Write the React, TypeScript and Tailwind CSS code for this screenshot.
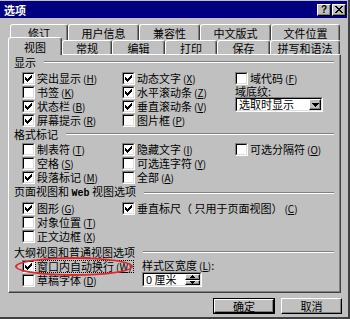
import React from "react";

const FONT = "font-['Noto_Sans_CJK_SC','Noto_Sans',sans-serif]";

function Check() {
  const px: [number, number][] = [
    [6, 0],
    [5, 1], [6, 1],
    [0, 2], [4, 2], [5, 2], [6, 2],
    [0, 3], [1, 3], [3, 3], [4, 3], [5, 3],
    [0, 4], [1, 4], [2, 4], [3, 4], [4, 4],
    [1, 5], [2, 5], [3, 5],
    [2, 6],
  ];
  return (
    <svg width="7" height="7" viewBox="0 0 7 7" shapeRendering="crispEdges">
      {px.map(([x, y], i) => (
        <rect key={i} x={x} y={y} width="1" height="1" fill="#000" />
      ))}
    </svg>
  );
}

function Box({ checked }: { checked?: boolean }) {
  return (
    <span className="flex w-[13px] h-[13px] shrink-0 border border-t-[#808080] border-l-[#808080] border-b-white border-r-white">
      <span className="flex flex-1 items-center justify-center bg-white border border-t-black border-l-black border-b-[#dfdfdf] border-r-[#dfdfdf]">
        {checked && <Check />}
      </span>
    </span>
  );
}

function Key({ k }: { k: string }) {
  return (
    <span className="ml-[2px] text-[10px]">
      (<span className="underline">{k}</span>)
    </span>
  );
}

function Opt({
  label,
  k,
  checked,
  focus,
}: {
  label: string;
  k: string;
  checked?: boolean;
  focus?: boolean;
}) {
  return (
    <div className="flex items-center h-[14px] gap-[1px] whitespace-nowrap">
      <Box checked={checked} />
      <span className={focus ? "px-[1px] leading-[11px] outline-1 outline-dotted outline-black" : "px-[1px]"}>
        {label}
        <Key k={k} />
      </span>
    </div>
  );
}

function Header({ text }: { text: React.ReactNode }) {
  return (
    <div className="flex items-center h-[13px] whitespace-nowrap">
      <span>{text}</span>
      <span className="flex-1 ml-[8px] h-[2px] border-t border-t-[#808080] border-b border-b-white" />
    </div>
  );
}

function Tab({
  label,
  w,
  selected,
}: {
  label: string;
  w: string;
  selected?: boolean;
}) {
  return (
    <div
      className={`flex items-center justify-center shrink-0 ${w} bg-[#c0c0c0] border-t border-l border-r border-t-white border-l-white border-r-[#404040] rounded-t-[3px] shadow-[inset_-1px_0_0_#808080] ${
        selected ? "h-[18px] mb-[-1px]" : "h-full"
      }`}
    >
      {label}
    </div>
  );
}

const raised =
  "border border-t-white border-l-white border-r-black border-b-black shadow-[inset_-1px_-1px_0_#808080]";

export default function App() {
  return (
    <div
      className={`relative w-[350px] h-[319px] bg-[#c0c0c0] text-black text-[11px] leading-[14px] ${FONT} overflow-hidden border-r-2 border-b-2 border-r-[#404040] border-b-[#404040]`}
    >
      <div className="flex flex-col pt-[1px]">
        {/* title bar */}
        <div className="flex items-center h-[17px] w-[347px] bg-[#000080] pl-[4px] pr-[1px]">
          <span className="text-white font-bold text-[11px]">选项</span>
          <div className="ml-auto flex gap-[1px]">
            <div className={`flex items-center justify-center w-[14px] h-[12px] bg-[#c0c0c0] ${raised} text-[10px] leading-[10px] font-bold font-['Liberation_Sans',sans-serif]`}>
              ?
            </div>
            <div className={`flex items-center justify-center w-[14px] h-[12px] bg-[#c0c0c0] ${raised}`}>
              <svg width="8" height="7" viewBox="0 0 8 7" shapeRendering="crispEdges">
                <path d="M0 0h2v1h-2zM6 0h2v1h-2zM1 1h2v1h-2zM5 1h2v1h-2zM2 2h4v1h-4zM3 3h2v1h-2zM2 4h4v1h-4zM1 5h2v1h-2zM5 5h2v1h-2zM0 6h2v1h-2zM6 6h2v1h-2z" fill="#000" />
              </svg>
            </div>
          </div>
        </div>

        {/* tabs */}
        <div className="mt-[6px] flex h-[16px] ml-[10px]">
          <Tab label="修订" w="w-[58px]" />
          <Tab label="用户信息" w="w-[71px]" />
          <Tab label="兼容性" w="w-[61px]" />
          <Tab label="中文版式" w="w-[71px]" />
          <Tab label="文件位置" w="w-[69px]" />
        </div>
        <div className="relative z-10 flex items-end h-[14px] ml-[8px]">
          <Tab label="视图" w="w-[54px]" selected />
          <Tab label="常规" w="w-[50px]" />
          <Tab label="编辑" w="w-[53px]" />
          <Tab label="打印" w="w-[52px]" />
          <Tab label="保存" w="w-[53px]" />
          <Tab label="拼写和语法" w="w-[70px]" />
        </div>

        {/* panel */}
        <div className="ml-[8px] w-[333px] h-[239px] flex flex-col pl-[5px] pr-[6px] border border-t-white border-l-white border-r-[#404040] border-b-[#404040] shadow-[inset_-1px_-1px_0_#808080]">
          <Header text="显示" />
          <div className="mt-[3px] ml-[8px] flex">
            <div className="w-[100px] flex flex-col">
              <Opt label="突出显示" k="H" checked />
              <Opt label="书签" k="K" />
              <Opt label="状态栏" k="B" checked />
              <Opt label="屏幕提示" k="R" checked />
            </div>
            <div className="w-[113px] flex flex-col">
              <Opt label="动态文字" k="X" checked />
              <Opt label="水平滚动条" k="Z" checked />
              <Opt label="垂直滚动条" k="V" checked />
              <Opt label="图片框" k="P" />
            </div>
            <div className="flex flex-col">
              <Opt label="域代码" k="F" />
              <div className="h-[12px] leading-[12px]">
                域底纹<span className="underline">:</span>
              </div>
              <div className="flex w-[88px] h-[15px] border border-t-[#808080] border-l-[#808080] border-b-white border-r-white">
                <div className="flex flex-1 items-center bg-white border border-t-black border-l-black border-b-[#dfdfdf] border-r-[#dfdfdf]">
                  <span className="flex-1 pl-[2px] leading-[11px]">选取时显示</span>
                  <div className={`flex items-center justify-center w-[12px] h-full bg-[#c0c0c0] ${raised}`}>
                    <svg width="7" height="4" viewBox="0 0 7 4" shapeRendering="crispEdges">
                      <path d="M0 0h7v1h-7zM1 1h5v1h-5zM2 2h3v1h-3zM3 3h1v1h-1z" fill="#000" />
                    </svg>
                  </div>
                </div>
              </div>
            </div>
          </div>

          <Header text="格式标记" />
          <div className="mt-[2px] ml-[8px] flex">
            <div className="w-[100px] flex flex-col">
              <Opt label="制表符" k="T" />
              <Opt label="空格" k="S" />
              <Opt label="段落标记" k="M" checked />
            </div>
            <div className="w-[113px] flex flex-col">
              <Opt label="隐藏文字" k="I" checked />
              <Opt label="可选连字符" k="Y" />
              <Opt label="全部" k="A" />
            </div>
            <div className="flex flex-col">
              <Opt label="可选分隔符" k="O" />
            </div>
          </div>

          <div className="mt-[2px]">
            <Header
              text={
                <>
                  页面视图和 <span className="font-['Liberation_Mono',monospace] font-bold text-[10px]">Web</span> 视图选项
                </>
              }
            />
          </div>
          <div className="mt-[2px] ml-[8px] flex">
            <div className="w-[100px] flex flex-col">
              <Opt label="图形" k="G" checked />
              <Opt label="对象位置" k="T" />
              <Opt label="正文边框" k="X" />
            </div>
            <div className="flex flex-col">
              <Opt label="垂直标尺（ 只用于页面视图）" k="C" checked />
            </div>
          </div>

          <div className="mt-[2px]">
            <Header text="大纲视图和普通视图选项" />
          </div>
          <div className="mt-[1px] ml-[8px] flex">
            <div className="w-[120px] flex flex-col">
              <Opt label="窗口内自动换行" k="W" checked focus />
              <Opt label="草稿字体" k="D" />
            </div>
            <div className="flex flex-col">
              <div className="h-[13px] leading-[13px] whitespace-nowrap">
                样式区宽度<Key k="L" />:
              </div>
              <div className="flex w-[60px] h-[15px] border border-t-[#808080] border-l-[#808080] border-b-white border-r-white">
                <div className="flex flex-1 items-center bg-white border border-t-black border-l-black border-b-[#dfdfdf] border-r-[#dfdfdf]">
                  <span className="flex-1 pl-[2px] leading-[11px]">0 厘米</span>
                  <div className="flex flex-col w-[15px] h-full">
                    <div className={`flex flex-1 items-center justify-center bg-[#c0c0c0] ${raised}`}>
                      <svg width="5" height="3" viewBox="0 0 5 3" shapeRendering="crispEdges">
                        <path d="M2 0h1v1h-1zM1 1h3v1h-3zM0 2h5v1h-5z" fill="#000" />
                      </svg>
                    </div>
                    <div className={`flex flex-1 items-center justify-center bg-[#c0c0c0] ${raised}`}>
                      <svg width="5" height="3" viewBox="0 0 5 3" shapeRendering="crispEdges">
                        <path d="M0 0h5v1h-5zM1 1h3v1h-3zM2 2h1v1h-1z" fill="#000" />
                      </svg>
                    </div>
                  </div>
                </div>
              </div>
            </div>
          </div>
        </div>

        {/* buttons */}
        <div className="mt-[5px] flex justify-end gap-[6px] pr-[6px]">
          <div className="w-[62px] h-[16px] border border-black flex">
            <div className={`flex flex-1 items-center justify-center ${raised}`}>确定</div>
          </div>
          <div className={`w-[61px] h-[16px] flex items-center justify-center ${raised}`}>取消</div>
        </div>
      </div>

      {/* red annotation ellipse */}
      <div className="absolute left-[15px] top-[257px] w-[118px] h-[19px] border-2 border-[#e0282c] rounded-[50%] pointer-events-none" />
    </div>
  );
}
